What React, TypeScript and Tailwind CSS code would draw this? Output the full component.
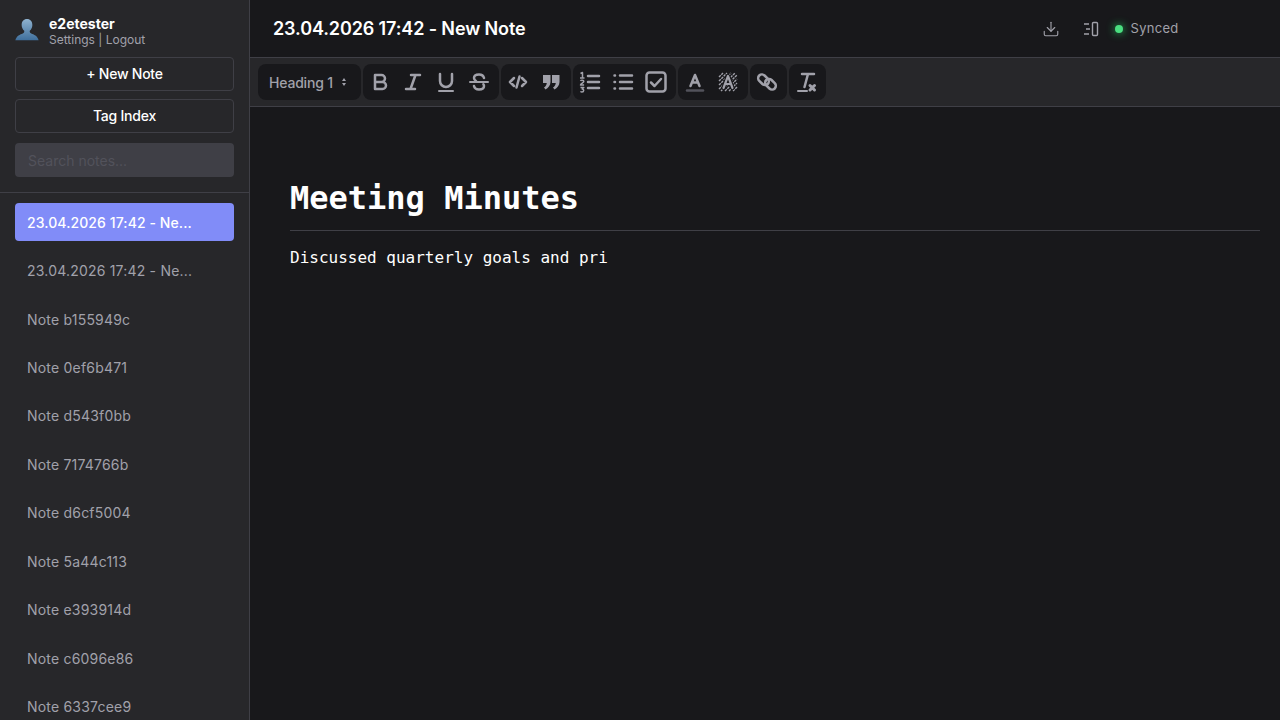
import { Download } from "lucide-react";

const notes = ["Note b155949c", "Note 0ef6b471", "Note d543f0bb", "Note 7174766b", "Note d6cf5004", "Note 5a44c113", "Note e393914d", "Note c6096e86", "Note 6337cee9"];

function Icon({ children, w = 24 }: { children: React.ReactNode; w?: number }) {
  return (
    <svg width={w} height={24} viewBox={`0 0 ${w} 24`} fill="none" stroke="currentColor" strokeWidth="2.5" strokeLinecap="round" strokeLinejoin="round">
      {children}
    </svg>
  );
}

function Group({ children }: { children: React.ReactNode }) {
  return <div className="flex h-9 items-center gap-[9px] rounded-lg bg-[#18181b] pr-[8px] pl-[5px]">{children}</div>;
}

export default function App() {
  return (
    <div className="flex h-[720px] w-[1280px] overflow-hidden bg-[#18181b] font-['Inter',sans-serif] text-[14px]">
      <aside className="flex w-[250px] shrink-0 flex-col border-r border-[#3f3f46] bg-[#27272a]">
        <div className="flex flex-col border-b border-[#3f3f46] px-[15px] pt-[14px] pb-[15px]">
          <div className="flex h-[33px] items-center gap-[10px]">
            <svg width="24" height="24" viewBox="0 0 26 26">
              <defs>
                <linearGradient id="u" x1="0" y1="0" x2="0" y2="1">
                  <stop offset="0" stopColor="#8fb2cf" />
                  <stop offset="1" stopColor="#3f6f9c" />
                </linearGradient>
              </defs>
              <path d="M13 0c3.600 0 5.800 2.800 5.800 6.400 0 2.600-1.200 5-2.800 6.400-.3 1.400.2 2.200 1.600 2.900 2.600 1.200 6.800 2.300 8 7.300H.4c1.200-5 5.400-6.100 8-7.300 1.400-.7 1.900-1.500 1.600-2.900C8.400 11.400 7.200 9 7.200 6.400 7.200 2.800 9.400 0 13 0z" fill="url(#u)" />
            </svg>
            <div className="flex flex-col">
              <span className="text-[14px] leading-[17px] font-bold text-white">e2etester</span>
              <span className="text-[12px] leading-[15px] text-[#a1a1aa]">Settings | Logout</span>
            </div>
          </div>
          <button className="mt-[10px] h-[34px] rounded border border-[#3f3f46] pb-[2px] text-[14px] font-medium tracking-[-0.25px] text-white">+ New Note</button>
          <button className="mt-[8px] h-[34px] rounded border border-[#3f3f46] pb-[2px] text-[14px] font-medium tracking-[-0.22px] text-white">Tag Index</button>
          <input
            placeholder="Search notes..."
            className="mt-[10px] h-[34px] rounded bg-[#3f3f46] px-[13px] text-[14px] outline-none placeholder:text-[#52525b]"
          />
        </div>
        <div className="flex flex-col gap-[10px] px-[15px] pt-[10px]">
          <div className="flex h-[38.45px] shrink-0 items-center rounded bg-[#818cf8] px-3 font-medium tracking-[0.09px] text-white">23.04.2026 17:42 - Ne...</div>
          <div className="flex h-[38.45px] shrink-0 items-center px-3 tracking-[0.2px] text-[#a1a1aa]">23.04.2026 17:42 - Ne...</div>
          {notes.map((n) => (
            <div key={n} className="flex h-[38.45px] shrink-0 items-center px-3 tracking-[0.2px] text-[#a1a1aa]">{n}</div>
          ))}
        </div>
      </aside>
      <main className="flex min-w-0 flex-1 flex-col">
        <header className="flex h-[58px] shrink-0 items-center border-b border-[#3f3f46] pl-[23px]">
          <h1 className="text-[18px] font-semibold tracking-[-0.12px] text-white">23.04.2026 17:42 - New Note</h1>
          <div className="ml-[516px] flex items-center text-[#a1a1aa]">
            <Download size={18} strokeWidth={1.5} />
            <svg className="ml-[22px]" width="18" height="18" viewBox="0 0 18 18" fill="none" stroke="currentColor" strokeWidth="1.4">
              <rect x="10.500" y="2.500" width="5" height="13" rx="1" />
              <path d="M2 4h5M4 9h4M2 14h5" />
            </svg>
            <span className="ml-[15px] h-2 w-2 rounded-full bg-[#4ade80] shadow-[0_0_8px_#22c55e]" />
            <span className="ml-[8px] pt-px text-[13px] tracking-[0.3px]">Synced</span>
          </div>
        </header>
        <div className="flex h-[49px] shrink-0 items-center gap-[2px] border-b border-[#3f3f46] bg-[#27272a] pl-[8px] text-[#a1a1aa]">
          <div className="flex h-9 w-[103px] items-center rounded-lg bg-[#18181b] pl-[11px] text-[14px] font-medium tracking-[-0.2px]">
            Heading 1
            <svg className="ml-[8px]" width="6" height="8" viewBox="0 0 6 8" fill="currentColor"><path d="M3 0l2 3H1zM3 8L1 5h4z" /></svg>
          </div>
          <Group>
            <Icon><path d="M7 5h6.500a3.500 3.500 0 0 1 0 7H7zM7 12h7.500a3.500 3.500 0 0 1 0 7H7z" /></Icon>
            <Icon><path d="M10 5h9M5 19h9M14.500 5l-5 14" /></Icon>
            <Icon><path d="M6 4v7a6 6 0 0 0 12 0V4" /><path strokeWidth="2" d="M5 21h14" /></Icon>
            <Icon><path strokeWidth="2" d="M3 12h18" /><path d="M17 8c-.5-2.200-2.500-3.500-5-3.500-2.800 0-5 1.300-5 3.500 0 1.300.7 2.300 2 3M7 16c.5 2.200 2.500 3.500 5 3.500 2.800 0 5-1.300 5-3.500 0-.7-.2-1.300-.6-1.800" /></Icon>
          </Group>
          <Group>
            <Icon><path d="M8 8l-4 4 4 4M16 8l4 4-4 4M13.500 6.500l-3 11" /></Icon>
            <Icon><path fill="currentColor" stroke="none" d="M4 5h7.500v7c0 3.500-2.500 6-5 7.500L5 17.500c1.500-1 2.500-2.500 2.800-4.500H4zM13 5h7.500v7c0 3.500-2.500 6-5 7.500L14 17.500c1.500-1 2.500-2.500 2.800-4.500H13z" /></Icon>
          </Group>
          <Group>
            <Icon>
              <path d="M10 6h11M10 12h11M10 18h11" />
              <path strokeWidth="1.500" strokeLinecap="butt" d="M2.500 3.500L4.500 2.500V8M2 8h4.500M2.500 11c.5-1 3.300-1 3.300.5 0 1.200-3.300 2-3.300 3.500h3.600M2.500 17.500h3.300l-1.600 1.500c2 0 2 3-.2 3-.6 0-1.200-.2-1.500-.6" />
            </Icon>
            <Icon><path d="M9 5.500h12M9 12h12M9 18.500h12M3.500 5.500h.5M3.500 12h.5M3.500 18.500h.5" /></Icon>
            <Icon><rect x="2.500" y="2.500" width="19" height="19" rx="3" /><path d="M7 12.500l3.500 3.500L17 9" /></Icon>
          </Group>
          <Group>
            <Icon><path d="M7.500 16L12 5l4.500 11M9 12.500h6" /><path d="M4 20.500h16" stroke="#52525b" /></Icon>
            <Icon>
              <path strokeWidth="1.400" strokeDasharray="2.500 0.8" strokeLinecap="butt" d="M3 7l4-4M3 11l8-8M3 15L15 3M3 19L19 3M5 21L21 5M9 21L21 9M13 21l8-8M17 21l4-4" />
              <path stroke="#18181b" strokeWidth="4.500" d="M7.500 18L12 6l4.500 12" />
              <path strokeWidth="2.200" d="M7.500 18L12 6l4.500 12M9.500 14h5" />
            </Icon>
          </Group>
          <Group>
            <Icon>
              <rect x="2.500" y="6" width="12" height="7.500" rx="3.750" transform="rotate(45 8.500 9.750)" />
              <rect x="9.500" y="10.500" width="12" height="7.500" rx="3.750" transform="rotate(45 15.500 14.250)" />
            </Icon>
          </Group>
          <Group>
            <Icon><path d="M8 4h12M14 4l-3.500 13" /><path strokeWidth="2" d="M4 21h9" /><path strokeWidth="3" d="M16 15.500l4.500 4.500M20.500 15.500L16 20" /></Icon>
          </Group>
        </div>
        <div className="pt-[67px] pr-[20px] pl-[40px] font-['DejaVu_Sans_Mono',monospace] text-white">
          <h2 className="border-b border-[#3f3f46] pb-[8px] text-[32px] leading-[48px] font-bold">Meeting Minutes</h2>
          <p className="mt-[15px] text-[16px] leading-[24px]">Discussed quarterly goals and pri</p>
        </div>
      </main>
    </div>
  );
}
